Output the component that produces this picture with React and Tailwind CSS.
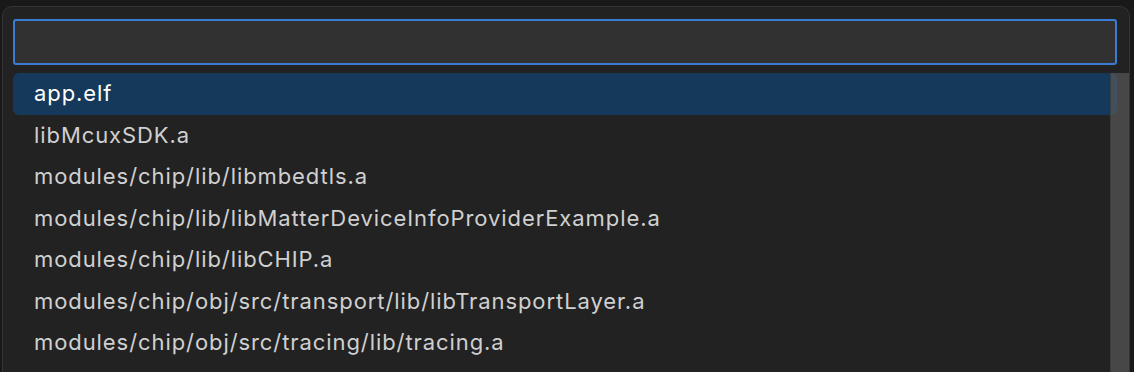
import React from 'react';

const items = [
  'app.elf',
  'libMcuxSDK.a',
  'modules/chip/lib/libmbedtls.a',
  'modules/chip/lib/libMatterDeviceInfoProviderExample.a',
  'modules/chip/lib/libCHIP.a',
  'modules/chip/obj/src/transport/lib/libTransportLayer.a',
  'modules/chip/obj/src/tracing/lib/tracing.a',
];

const App = () => {
  return (
    <div
      className="w-[1134px] h-[372px] overflow-hidden bg-[#191919] pt-[6px] pl-[2px]"
      style={{ fontFamily: 'Inter, "Liberation Sans", sans-serif' }}
    >
      <div className="w-[1128px] h-[400px] rounded-[10px] border border-[#343434] bg-[#222222] pt-[12px] pl-[10px] relative">
        {/* Search input */}
        <div className="w-[1104px] h-[46px] rounded-[3px] border-2 border-[#3a7bd4] bg-[#313131]" />

        {/* Results list */}
        <div className="mt-[8px] w-[1104px]">
          {items.map((item, i) => (
            <div
              key={item}
              className={
                i === 0
                  ? 'h-[41.5px] flex items-center pl-[21px] rounded-[6px] bg-[#15395a] text-white text-[22px] tracking-[0.92px]'
                  : 'h-[41.5px] flex items-center pl-[21px] text-[#d0d0d0] text-[22px] tracking-[0.92px]'
              }
            >
              {item}
            </div>
          ))}
        </div>

        {/* Scrollbar */}
        <div className="absolute left-[1107px] top-[66px] w-[19px] h-[340px] bg-[#606060]/60 border-l border-[#3c3c3c]" />
      </div>
    </div>
  );
};

export default App;
